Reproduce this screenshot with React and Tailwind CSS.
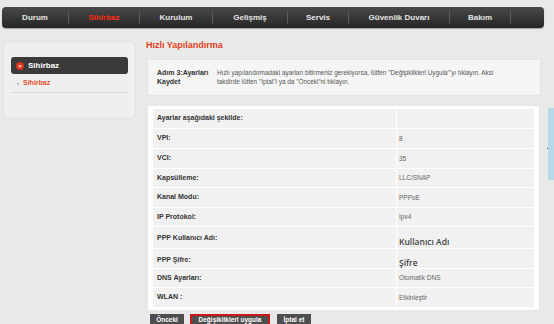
import React from 'react';

const tabs = [
  { label: 'Durum', w: 'w-[66px]' },
  { label: 'Sihirbaz', w: 'w-[71px]', active: true },
  { label: 'Kurulum', w: 'w-[73px]' },
  { label: 'Gelişmiş', w: 'w-[75px]' },
  { label: 'Servis', w: 'w-[61px]' },
  { label: 'Güvenlik Duvarı', w: 'w-[101px]' },
  { label: 'Bakım', w: 'w-[61px]' },
];

const rows = [
  { label: 'Ayarlar aşağıdaki şekilde:', value: '', h: 'h-[19px]' },
  { label: 'VPI:', value: '8', h: 'h-[19px]' },
  { label: 'VCI:', value: '35', h: 'h-[19px]' },
  { label: 'Kapsülleme:', value: 'LLC/SNAP', h: 'h-[18px]' },
  { label: 'Kanal Modu:', value: 'PPPoE', h: 'h-[19px]' },
  { label: 'IP Protokol:', value: 'Ipv4', h: 'h-[18px]' },
  { label: 'PPP Kullanıcı Adı:', value: 'Kullanıcı Adı', h: 'h-[21px]', big: true },
  { label: 'PPP Şifre:', value: 'Şifre', h: 'h-[19px]', big: true },
  { label: 'DNS Ayarları:', value: 'Otomatik DNS', h: 'h-[18px]' },
  { label: 'WLAN :', value: 'Etkinleştir', h: 'h-[19px]' },
];

export default function App() {
  return (
    <div className="w-[554px] h-[324px] overflow-hidden bg-[#e9e9e9] font-['Liberation_Sans',Arial,sans-serif] relative">
      {/* top nav */}
      <div className="pt-[7px] pl-[2px]">
        <div className="w-[542px] h-[21px] rounded-[4px] bg-gradient-to-b from-[#4a4a4a] to-[#262626] flex items-center shadow-[0_1px_1px_rgba(0,0,0,0.3)]">
          {tabs.map((t, i) => (
            <div
              key={t.label}
              className={`${t.w} h-[13px] flex items-center justify-center text-[8px] font-bold ${i > 0 ? 'border-l border-[#5a5a5a]' : ''} ${t.active ? 'text-[#ff2a10]' : 'text-[#e6e6e6]'}`}
            >
              {t.label}
            </div>
          ))}
          <div className="w-[34px] h-[13px] border-l border-[#5a5a5a]" />
        </div>
      </div>

      <div className="flex mt-[13px]">
        {/* sidebar */}
        <div className="ml-[3px] w-[133px] h-[78px] rounded-[5px] bg-[#efefef] border border-[#e2e2e2] px-[7px] pt-[15px]">
          <div className="h-[17px] rounded-[3px] bg-[#3a3a3a] flex items-center pl-[5px] gap-[4px]">
            <span className="w-[8px] h-[8px] rounded-full bg-[#d8321a] text-white text-[6px] font-bold flex items-center justify-center leading-none">&gt;</span>
            <span className="text-[8px] font-bold text-white">Sihirbaz</span>
          </div>
          <div className="h-[19px] flex items-center pl-[6px] gap-[4px] border-b border-[#dcdcdc]">
            <span className="text-[6px] text-[#555]">›</span>
            <span className="text-[7px] font-bold text-[#e0502a]">Sihirbaz</span>
          </div>
        </div>

        {/* main */}
        <div className="ml-[11px] w-[394px]">
          <div className="h-[10px] -ml-[1px] flex items-center text-[9px] font-bold text-[#e2401a]">
            Hızlı Yapılandırma
          </div>
          <div className="mt-[8px] h-[37px] bg-[#f5f5f5] border border-[#e4e4e4] flex items-start pt-[8px] pl-[9px]">
            <div className="w-[60px] text-[7px] font-bold text-[#333] leading-[9px]">Adım 3:Ayarları Kaydet</div>
            <div className="w-[316px] text-[6.4px] text-[#555] leading-[9px]">
              Hızlı yapılandırmadaki ayarları bitirmeniz gerekiyorsa, lütfen "Değişiklikleri Uygula"'yı tıklayın. Aksi<br />takdirde lütfen "İptal"i ya da "Önceki"ni tıklayın.
            </div>
          </div>

          <div className="mt-[9px] w-[393px] bg-white border border-[#e6e6e6] px-[5px] pt-[3px] pb-[3px] flex flex-col gap-[1px]">
            {rows.map(r => (
              <div key={r.label} className={`${r.h} flex gap-[1px]`}>
                <div className={`w-[243px] bg-[#f1f1f1] flex pl-[4px] text-[7px] font-bold text-[#333] ${r.big ? 'items-start pt-[6px]' : 'items-center'}`}>
                  {r.label}
                </div>
                <div className={`flex-1 bg-[#f1f1f1] flex items-center pl-[2px] ${r.big ? "text-[8.5px] font-semibold text-[#444] font-['Open_Sans',sans-serif] pt-[10px]" : 'text-[6.5px] text-[#666]'}`}>
                  {r.value}
                </div>
              </div>
            ))}
          </div>

          <div className="mt-[3px] flex items-start">
            <button className="ml-[3px] w-[34px] h-[12px] bg-[#4e4e4e] text-white text-[6.5px] font-bold leading-none">Önceki</button>
            <button className="ml-[6px] w-[80px] h-[12px] bg-[#4e4e4e] border-2 border-[#c81818] text-white text-[6.5px] font-bold leading-none">Değişiklikleri uygula</button>
            <button className="ml-[7px] w-[34px] h-[12px] bg-[#4e4e4e] text-white text-[6.5px] font-bold leading-none">İptal et</button>
          </div>
        </div>
      </div>

      {/* right side panel edge */}
      <div className="absolute left-[548px] top-[108px] w-[6px] h-[72px] bg-[#b7d9ea]" />
      <div className="absolute left-[547px] top-[148px] w-[1px] h-[1px] bg-[#555]" />
    </div>
  );
}
